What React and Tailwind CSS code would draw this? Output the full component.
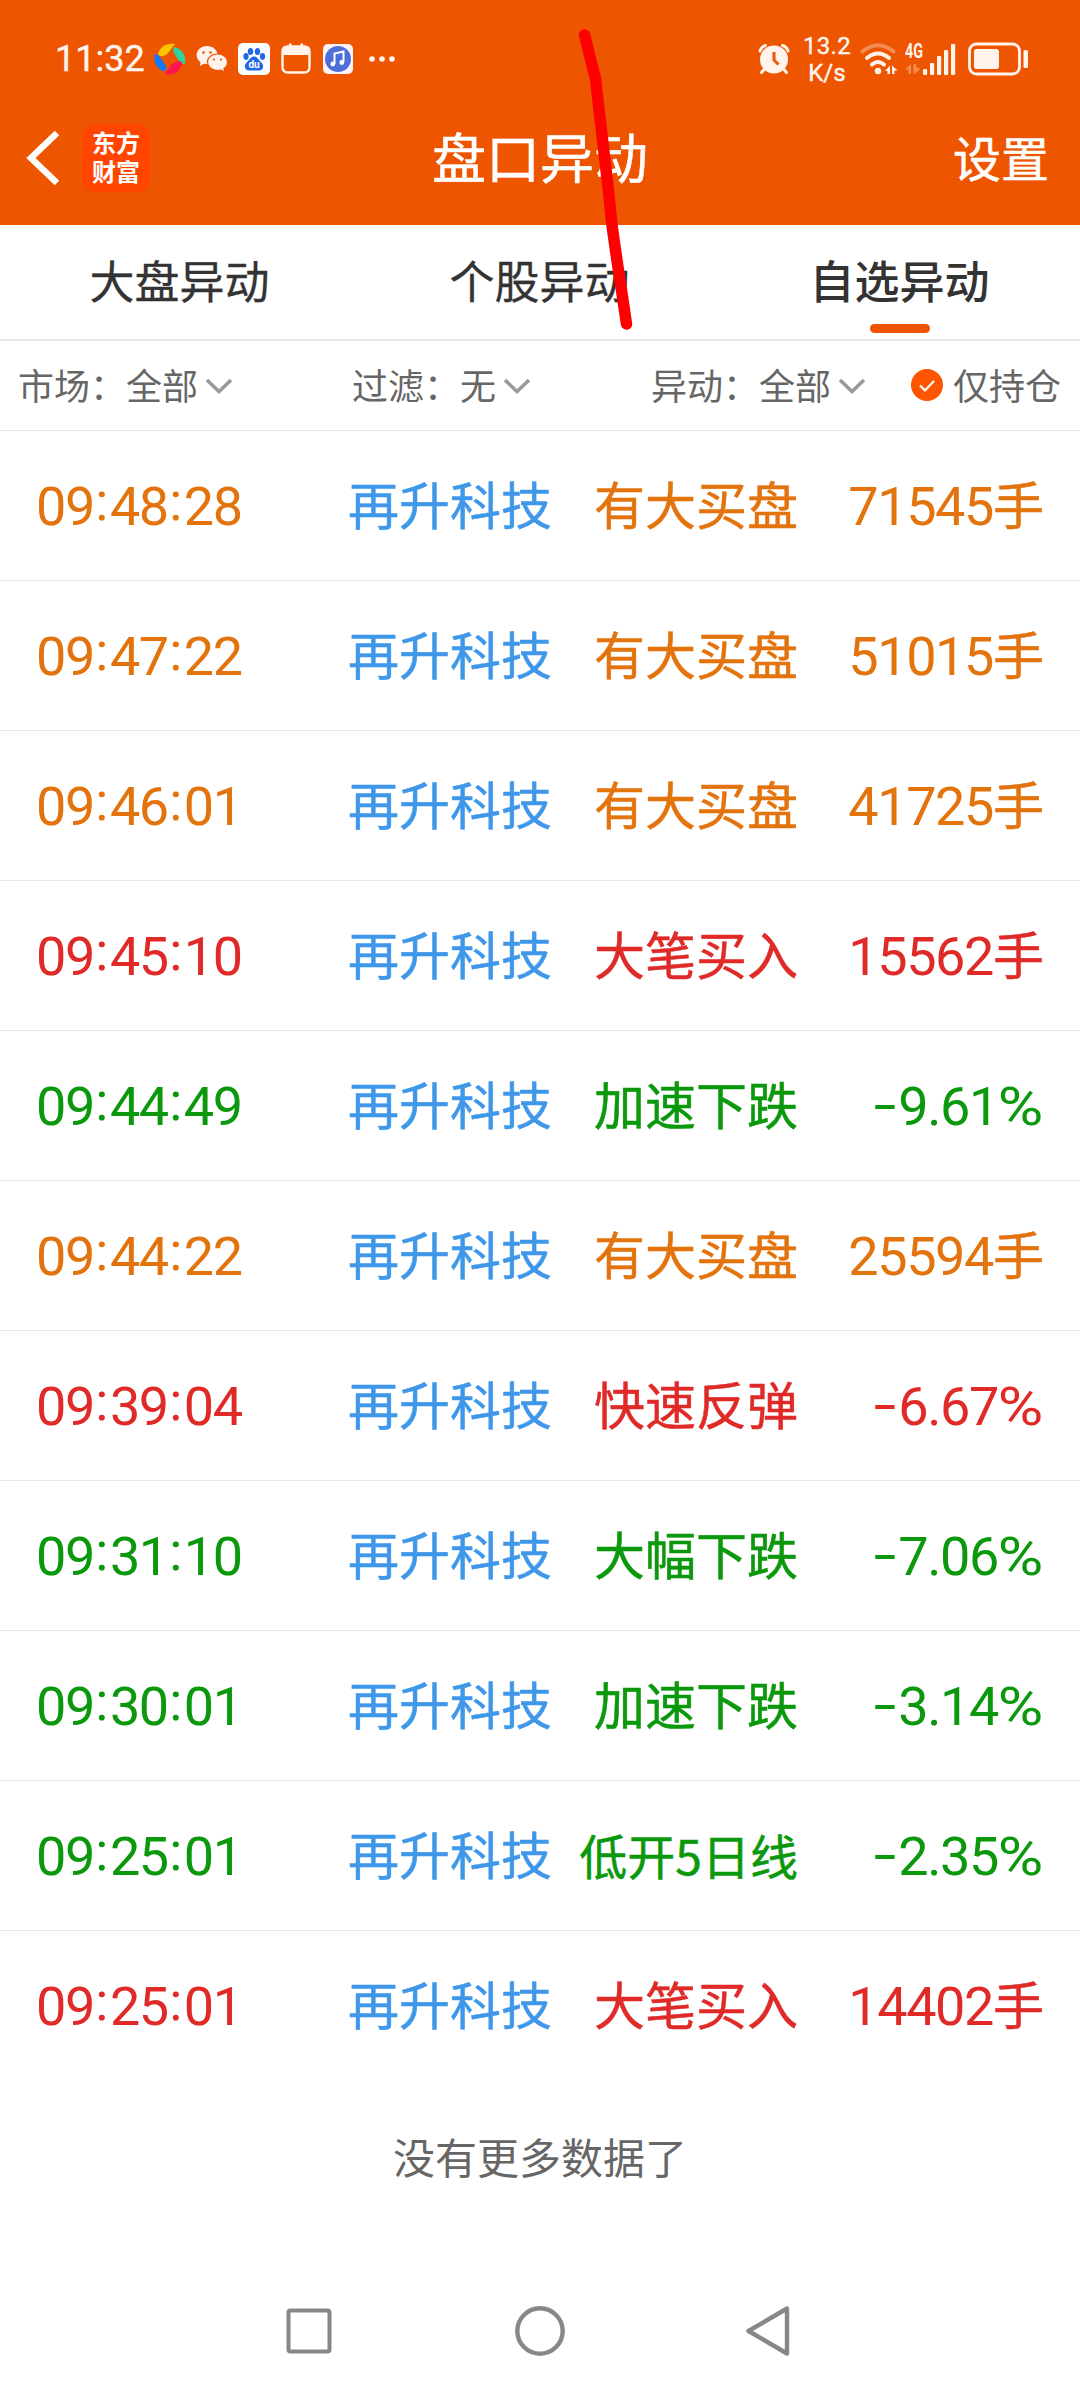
import { clsx } from "clsx";

const TONES = {
  orange: "text-[#e3730c]",
  red: "text-[#df2a28]",
  green: "text-[#0c980c]",
};

const tabs = ["大盘异动", "个股异动", "自选异动"];

const rows = [
  { time: "09:48:28", stock: "再升科技", event: "有大买盘", value: "71545手", tone: "orange" },
  { time: "09:47:22", stock: "再升科技", event: "有大买盘", value: "51015手", tone: "orange" },
  { time: "09:46:01", stock: "再升科技", event: "有大买盘", value: "41725手", tone: "orange" },
  { time: "09:45:10", stock: "再升科技", event: "大笔买入", value: "15562手", tone: "red" },
  { time: "09:44:49", stock: "再升科技", event: "加速下跌", value: "-9.61%", tone: "green" },
  { time: "09:44:22", stock: "再升科技", event: "有大买盘", value: "25594手", tone: "orange" },
  { time: "09:39:04", stock: "再升科技", event: "快速反弹", value: "-6.67%", tone: "red" },
  { time: "09:31:10", stock: "再升科技", event: "大幅下跌", value: "-7.06%", tone: "green" },
  { time: "09:30:01", stock: "再升科技", event: "加速下跌", value: "-3.14%", tone: "green" },
  { time: "09:25:01", stock: "再升科技", event: "低开5日线", value: "-2.35%", tone: "green" },
  { time: "09:25:01", stock: "再升科技", event: "大笔买入", value: "14402手", tone: "red" },
];

// Digits are set in Roboto, a touch larger than the Chinese text beside them
const Numeric = ({ text }) => (
  <span className="font-['Roboto',sans-serif] text-[54px] tracking-[-1.4px]">
    {text.split("").map((char, i) => {
      if (char === ":")
        return (
          <span key={i} className="relative -top-[5px] inline-block w-[16px] text-center tracking-normal">
            :
          </span>
        );
      if (char === "-")
        return (
          <span key={i} className="relative -top-[2px] inline-block w-[26px] scale-x-150 text-center tracking-normal">
            -
          </span>
        );
      if (char === "%")
        return (
          <span key={i} className="mr-px inline-block w-[45px] scale-x-[1.15] text-center tracking-normal">
            %
          </span>
        );
      if (char === "手")
        return (
          <span key={i} className="font-['Noto_Sans_CJK_SC',sans-serif] text-[51px] tracking-normal [-webkit-text-stroke:0.5px]">
            手
          </span>
        );
      return char;
    })}
  </span>
);

const StatusBar = () => (
  <div className="flex h-[118px] items-center pl-[55px] pr-[52px] text-[#fff3ec]">
    <span className="w-[99px] font-['Roboto',sans-serif] text-[36px] leading-none [-webkit-text-stroke:0.4px]">11:32</span>

    {/* Pinwheel */}
    <svg className="size-8" viewBox="0 0 32 32">
      <path d="M4 11C6 4 12 0 21 1L14 10C11 14 5 14 4 11Z" fill="#ffc400" />
      <path d="M21 4C28 6 32 12 31 20C30 22 27 21 25 18L20 10C19 7 19 4 21 4Z" fill="#2fd3a0" />
      <path d="M28 20C27 28 20 33 11 31L17 22C21 18 28 17 28 20Z" fill="#ff1450" />
      <path d="M1 11C3 10 6 14 8 17L12 23C13 26 11 29 9 28C2 25-1 18 1 11Z" fill="#1478ff" />
    </svg>

    {/* WeChat */}
    <svg className="ml-[10px] h-8 w-8" viewBox="0 0 32 32">
      <path d="M11 3C5 3 .6 7 .6 12C.6 15 2 17.500 4.500 19.200L3.800 23L8 20.700L11 21C17 21 21.500 17 21.500 12S17 3 11 3Z" fill="currentColor" />
      <path d="M21.500 11C16 11 11.500 14.500 11.500 19S16 27.500 21.500 27.500L25 27L29 29L28 25.500C30.300 24 31.600 21.700 31.600 19C31.600 14.500 27 11 21.500 11Z" fill="currentColor" stroke="#ed5500" strokeWidth="1.200" />
      <g fill="#ed5500">
        <circle cx="7.500" cy="9.500" r="1.300" />
        <circle cx="14.500" cy="9.500" r="1.300" />
        <circle cx="18" cy="16.500" r="1.100" />
        <circle cx="25" cy="16.500" r="1.100" />
      </g>
    </svg>

    {/* Baidu */}
    <svg className="ml-[10px] size-8" viewBox="0 0 32 32">
      <rect width="32" height="32" rx="5" fill="#fff" />
      <g fill="#2468e8">
        <ellipse cx="8" cy="13.500" rx="2.600" ry="3.400" />
        <ellipse cx="12.500" cy="8.500" rx="2.700" ry="3.600" />
        <ellipse cx="19.500" cy="8.500" rx="2.700" ry="3.600" />
        <ellipse cx="24.500" cy="13.500" rx="2.600" ry="3.400" />
        <path d="M16 13.500C19 13.500 20 16 23 19C27 23 25 27.500 21 27.500H11C7 27.500 5 23 9 19C12 16 13 13.500 16 13.500Z" />
      </g>
      <text x="16" y="25" textAnchor="middle" fontSize="10" fontWeight="bold" fontFamily="Roboto, sans-serif" fill="#fff">
        du
      </text>
    </svg>

    {/* Calendar */}
    <svg className="ml-[11px] h-8 w-[30px]" viewBox="0 0 30 32">
      <rect x="1.500" y="3.500" width="27" height="26" rx="5" fill="none" stroke="currentColor" strokeWidth="2.400" />
      <path d="M1 12V7Q1 3 5 3H25Q29 3 29 7V12Z M8 .5H10.500V4H8Z M19.500 .5H22V4H19.500Z" fill="currentColor" />
    </svg>

    {/* Music */}
    <svg className="ml-3 size-[30px]" viewBox="0 0 30 30">
      <rect width="30" height="30" rx="5" fill="#fff3f6" />
      <circle cx="15" cy="15" r="13" fill="#4d6fd8" />
      <path d="M11.500 20V9.500L20.500 7.500V18" fill="none" stroke="#fff" strokeWidth="2" />
      <circle cx="9.800" cy="20" r="2.400" fill="#fff" />
      <circle cx="18.800" cy="18.500" r="2.400" fill="#fff" />
    </svg>

    <svg className="ml-4 h-[6px] w-[26px]" viewBox="0 0 26 6" fill="currentColor">
      <circle cx="3" cy="3" r="2.800" />
      <circle cx="13" cy="3" r="2.800" />
      <circle cx="23" cy="3" r="2.800" />
    </svg>

    {/* Alarm */}
    <svg className="ml-auto h-8 w-8" viewBox="0 0 32 32">
      <g fill="none" stroke="currentColor" strokeWidth="3" strokeLinecap="round">
        <path d="M2 8Q3.500 3.500 7.500 2.500M30 8Q28.500 3.500 24.500 2.500M6.500 26L3.500 29.500M25.500 26L28.500 29.500" />
      </g>
      <circle cx="16" cy="16.500" r="14" fill="currentColor" />
      <path d="M16 9V17L20.500 21.500" fill="none" stroke="#ed5500" strokeWidth="3" />
    </svg>

    <span className="ml-[10px] flex w-[54px] flex-col pt-[2px] text-center font-['Roboto',sans-serif] text-[24px] leading-[27px] [-webkit-text-stroke:0.4px]">
      <span className="tracking-[0.3px]">13.2</span>
      <span>K/s</span>
    </span>

    {/* Wi-Fi */}
    <svg className="ml-[6px] h-8 w-[38px]" viewBox="0 0 38 32">
      <g fill="none" stroke="currentColor" strokeWidth="4" strokeLinecap="round">
        <path d="M2.500 8.500Q18 -4 33.500 8.500" opacity=".35" />
        <path d="M7 15Q18 6 29 15" />
        <path d="M12 21.500Q18 16.500 24 21.500" />
      </g>
      <circle cx="18" cy="28" r="3.200" fill="currentColor" />
      <path d="M25 28L30 22.500V31H27.500V28ZM32 22.500L37.500 27.500H34.500V31H32Z" fill="currentColor" />
    </svg>

    {/* Mobile signal */}
    <svg className="ml-[7px] h-8 w-[52px] overflow-visible" viewBox="0 0 52 32">
      <text x="0" y="15" fontSize="20" fontWeight="bold" fontFamily="Roboto, sans-serif" textLength="18" lengthAdjust="spacingAndGlyphs" fill="currentColor">
        4G
      </text>
      <path d="M0 26.500L6 21V31H3.500V26.500ZM8.500 21H11V24L15.500 26L9.500 31H8.500Z" fill="currentColor" opacity=".35" />
      <g fill="currentColor">
        <rect x="18" y="26" width="4.200" height="6" rx="1" />
        <rect x="25" y="20" width="4.200" height="12" rx="1" />
        <rect x="32" y="13" width="4.200" height="19" rx="1" />
        <rect x="39" y="7" width="4.200" height="25" rx="1" />
        <rect x="46" y="1" width="4.200" height="31" rx="1" />
      </g>
    </svg>

    {/* Battery */}
    <svg className="ml-[11px] h-[34px] w-[60px]" viewBox="0 0 60 34">
      <rect x="1.500" y="2" width="50" height="30" rx="7" fill="none" stroke="currentColor" strokeWidth="2.800" />
      <rect x="6" y="7" width="25" height="20" rx="2.500" fill="currentColor" />
      <rect x="55.500" y="8" width="4.500" height="18" rx="1.500" fill="currentColor" />
    </svg>
  </div>
);

const TitleBar = () => (
  <div className="grid h-[107px] grid-cols-[1fr_auto_1fr] items-start text-white">
    <div className="flex items-center pl-[26px] pt-[6px]">
      <svg className="h-[56px] w-[34px]" viewBox="0 0 34 56">
        <path d="M31 3L5 28L31 53" fill="none" stroke="currentColor" strokeWidth="6.500" />
      </svg>
      <div className="ml-[22px] flex size-[68px] flex-col items-center justify-center rounded-[14px] bg-[#ff4500] pb-1 text-[24px] font-bold leading-[29px]">
        <span>东方</span>
        <span>财富</span>
      </div>
    </div>
    <h1 className="text-[54px] leading-[76px] [-webkit-text-stroke:0.5px]">盘口异动</h1>
    <button className="justify-self-end pr-[31px] text-[48px] leading-[76px] [-webkit-text-stroke:0.5px]">设置</button>
  </div>
);

const Chevron = () => (
  <svg className="ml-[7px] mt-[3px] h-4 w-7" viewBox="0 0 28 16">
    <path d="M2 2L14 13.500L26 2" fill="none" stroke="#999" strokeWidth="3.600" />
  </svg>
);

const Filter = ({ label, value, className }) => (
  <button className={clsx("flex shrink-0 items-center", className)}>
    <span>{label}：</span>
    <span>{value}</span>
    <Chevron />
  </button>
);

const App = () => (
  <div className="relative flex h-[2388px] w-[1080px] flex-col overflow-hidden bg-white font-['Noto_Sans_CJK_SC',sans-serif]">
    <header className="h-[225px] bg-[#ed5500]">
      <StatusBar />
      <TitleBar />
    </header>

    {/* Tabs */}
    <nav className="grid h-[116px] grid-cols-3 border-b-2 border-[#e6e6e6] text-[45px] text-[#333]">
      {tabs.map((tab, i) => (
        <button key={tab} className="flex flex-col items-center">
          <span className={clsx("h-[99px] pr-px leading-[110px]", i === 2 ? "font-medium" : "[-webkit-text-stroke:0.3px]")}>{tab}</span>
          {i === 2 && <span className="h-[9px] w-[60px] rounded-full bg-[#ed5500]" />}
        </button>
      ))}
    </nav>

    {/* Filters */}
    <div className="flex h-[90px] items-center border-b border-[#e6e6e6] pb-[3px] pl-[18px] text-[36px] text-[#666]">
      <Filter label="市场" value="全部" className="w-[334px]" />
      <Filter label="过滤" value="无" className="w-[299px]" />
      <Filter label="异动" value="全部" className="w-[260px]" />
      <svg className="mt-[2px] size-8" viewBox="0 0 32 32">
        <circle cx="16" cy="16" r="16" fill="#ff5500" />
        <path d="M9 16.500L14 21.500L23 12" fill="none" stroke="#fff" strokeWidth="2.200" />
      </svg>
      <span className="ml-[10px]">仅持仓</span>
    </div>

    {/* Records */}
    <ul>
      {rows.map((row, i) => (
        <li
          key={i}
          className={clsx(
            "flex h-[150px] items-center whitespace-nowrap border-b px-[36px] text-[51px]",
            i === rows.length - 1 ? "border-transparent" : "border-[#e6e6e6]",
            TONES[row.tone]
          )}
        >
          <span className="w-[312px]"><Numeric text={row.time} /></span>
          <span className="w-[204px] pb-[4px] text-[#3f97e9] [-webkit-text-stroke:0.5px]">{row.stock}</span>
          <span
            className={clsx(
              "w-[246px] pb-[4px] text-right [-webkit-text-stroke:0.5px]",
              row.event.length > 4 && "text-[48px]"
            )}
          >
            {row.event}
          </span>
          <span className="flex-1 text-right"><Numeric text={row.value} /></span>
        </li>
      ))}
    </ul>

    <p className="pt-[44px] text-center text-[42px] leading-[62px] text-[#666]">没有更多数据了</p>

    {/* System navigation */}
    <div className="mt-auto flex h-[114px] items-center justify-between pl-[284px] pr-[289px]">
      <svg className="size-[50px]" viewBox="0 0 50 50" fill="none" stroke="#868886" strokeWidth="4">
        <rect x="4.500" y="4.500" width="41" height="41" rx="2" />
      </svg>
      <svg className="size-[50px]" viewBox="0 0 50 50" fill="none" stroke="#868886" strokeWidth="4.400">
        <circle cx="25" cy="25" r="22.700" />
      </svg>
      <svg className="h-[50px] w-[46px]" viewBox="0 0 46 50" fill="none" stroke="#868886" strokeWidth="4.400" strokeLinejoin="round">
        <path d="M42 2.500V47.500L3.500 25Z" />
      </svg>
    </div>

    {/* Hand-drawn mark */}
    <svg className="pointer-events-none absolute left-[570px] top-[20px] h-[320px] w-[70px]" viewBox="570 20 70 320">
      <path
        d="M584.500 35L594 73Q596 78 596.500 88L602 135L608 187L612 225Q616 255 620 280L626.500 324"
        fill="none"
        stroke="#ff0000"
        strokeWidth="11.500"
        strokeLinecap="round"
        strokeLinejoin="round"
      />
    </svg>
  </div>
);

export default App;
